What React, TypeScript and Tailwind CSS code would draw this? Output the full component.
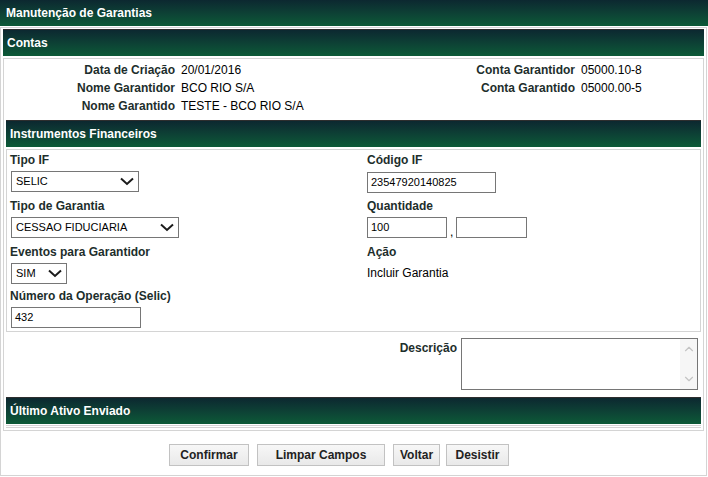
import { ChevronDown, ChevronUp } from 'lucide-react'

const headerCls =
  'h-[27px] border-t border-[#2e2e2e] bg-gradient-to-b from-[#0c2830] to-[#0c5a37] text-white font-bold text-[12px] flex items-center px-[4px]'

function Select({ value, width }: { value: string; width: string }) {
  return (
    <div className={`${width} h-[21px] border border-[#767676] bg-white flex items-center justify-between pl-[4px] pr-[3px] text-[11px] text-black`}>
      <span>{value}</span>
      <svg width="14" height="9" viewBox="0 0 14 9" className="mr-[1px]">
        <path d="M1 1.5 L7 7 L13 1.5" fill="none" stroke="#1b1b1b" strokeWidth="2" />
      </svg>
    </div>
  )
}

function Input({ value, width }: { value?: string; width: string }) {
  return (
    <div className={`${width} h-[21px] border border-[#767676] bg-white flex items-center px-[3px] text-[11px] text-black`}>
      {value}
    </div>
  )
}

function Label({ children }: { children: React.ReactNode }) {
  return <div className="h-[20px] flex items-center font-bold text-[#1d2e2c]">{children}</div>
}

export default function App() {
  const contas = [
    ['Data de Criação', '20/01/2016', 'Conta Garantidor', '05000.10-8'],
    ['Nome Garantidor', 'BCO RIO S/A', 'Conta Garantido', '05000.00-5'],
    ['Nome Garantido', 'TESTE - BCO RIO S/A', '', ''],
  ]

  return (
    <div className="w-[708px] h-[477px] bg-white font-['Liberation_Sans',Arial,sans-serif] text-[12px] text-black">
      <div className="h-[26px] bg-gradient-to-b from-[#0c2830] to-[#0c5a37] text-white font-bold flex items-center px-[6px]">
        Manutenção de Garantias
      </div>
      <div className="mt-px w-[707px] h-[449px] border border-[#d4d4d4] pt-px pl-[2px]">
        <div className={headerCls + ' w-[701px]'}>Contas</div>
        <div className="mt-[2px] w-[701px] h-[373px] border border-[#d4d4d4] px-[2px] pt-[2px]">
          <div className="flex flex-col">
            {contas.map((r) => (
              <div key={r[0]} className="h-[18px] flex items-center">
                <div className="w-[169px] text-right font-bold text-[#1d2e2c]">{r[0]}</div>
                <div className="ml-[6px] w-[222px]">{r[1]}</div>
                <div className="w-[172px] text-right font-bold text-[#1d2e2c]">{r[2]}</div>
                <div className="ml-[6px]">{r[3]}</div>
              </div>
            ))}
          </div>
          <div className={headerCls + ' mt-[5px] w-[695px] px-[4px]'}>Instrumentos Financeiros</div>
          <div className="mt-[2px] w-[695px] h-[183px] border border-[#d4d4d4] px-[3px] pt-0 grid grid-cols-[357px_1fr]">
            <div className="flex flex-col">
              <Label>Tipo IF</Label>
              <div className="mt-px ml-px"><Select value="SELIC" width="w-[128px]" /></div>
              <div className="mt-[4px]"><Label>Tipo de Garantia</Label></div>
              <div className="mt-px ml-px"><Select value="CESSAO FIDUCIARIA" width="w-[168px]" /></div>
              <div className="mt-[4px]"><Label>Eventos para Garantidor</Label></div>
              <div className="mt-px ml-px"><Select value="SIM" width="w-[56px]" /></div>
              <div className="mt-[2px]"><Label>Número da Operação (Selic)</Label></div>
              <div className="mt-px ml-px"><Input value="432" width="w-[130px]" /></div>
            </div>
            <div className="flex flex-col">
              <Label>Código IF</Label>
              <div className="mt-[2px]"><Input value="23547920140825" width="w-[129px]" /></div>
              <div className="mt-[3px]"><Label>Quantidade</Label></div>
              <div className="mt-px flex items-end">
                <Input value="100" width="w-[80px]" />
                <span className="mx-[2px] px-px leading-none">,</span>
                <Input width="w-[71px]" />
              </div>
              <div className="mt-[4px]"><Label>Ação</Label></div>
              <div className="h-[21px] flex items-center pt-px">Incluir Garantia</div>
            </div>
          </div>
          <div className="h-[65px] flex items-start pt-[6px]">
            <div className="w-[451px] pt-[1px] text-right font-bold text-[#1d2e2c]">Descrição</div>
            <div className="ml-[4px] w-[237px] h-[52px] border border-[#767676] bg-white flex justify-end">
              <div className="w-[17px] h-full bg-[#f6f6f6] flex flex-col items-center justify-between py-[3px]">
                <ChevronUp size={14} strokeWidth={2} className="text-[#c4c4c4]" />
                <ChevronDown size={14} strokeWidth={2} className="text-[#c4c4c4]" />
              </div>
            </div>
          </div>
          <div className={headerCls + ' w-[695px] px-[4px]'}>Último Ativo Enviado</div>
          <div className="mt-px w-[695px] h-[3px] border-t border-b border-[#d4d4d4]" />
        </div>
        <div className="mt-[13px] flex items-center pl-[166px] font-bold text-[#222]">
          <button className="w-[80px] h-[22px] border border-[#c2c2c2] bg-gradient-to-b from-[#f7f7f7] to-[#e9e9e9]">Confirmar</button>
          <button className="ml-[8px] w-[128px] h-[22px] border border-[#c2c2c2] bg-gradient-to-b from-[#f7f7f7] to-[#e9e9e9]">Limpar Campos</button>
          <button className="ml-[8px] w-[47px] h-[22px] border border-[#c2c2c2] bg-gradient-to-b from-[#f7f7f7] to-[#e9e9e9]">Voltar</button>
          <button className="ml-[6px] w-[63px] h-[22px] border border-[#c2c2c2] bg-gradient-to-b from-[#f7f7f7] to-[#e9e9e9]">Desistir</button>
        </div>
      </div>
    </div>
  )
}
